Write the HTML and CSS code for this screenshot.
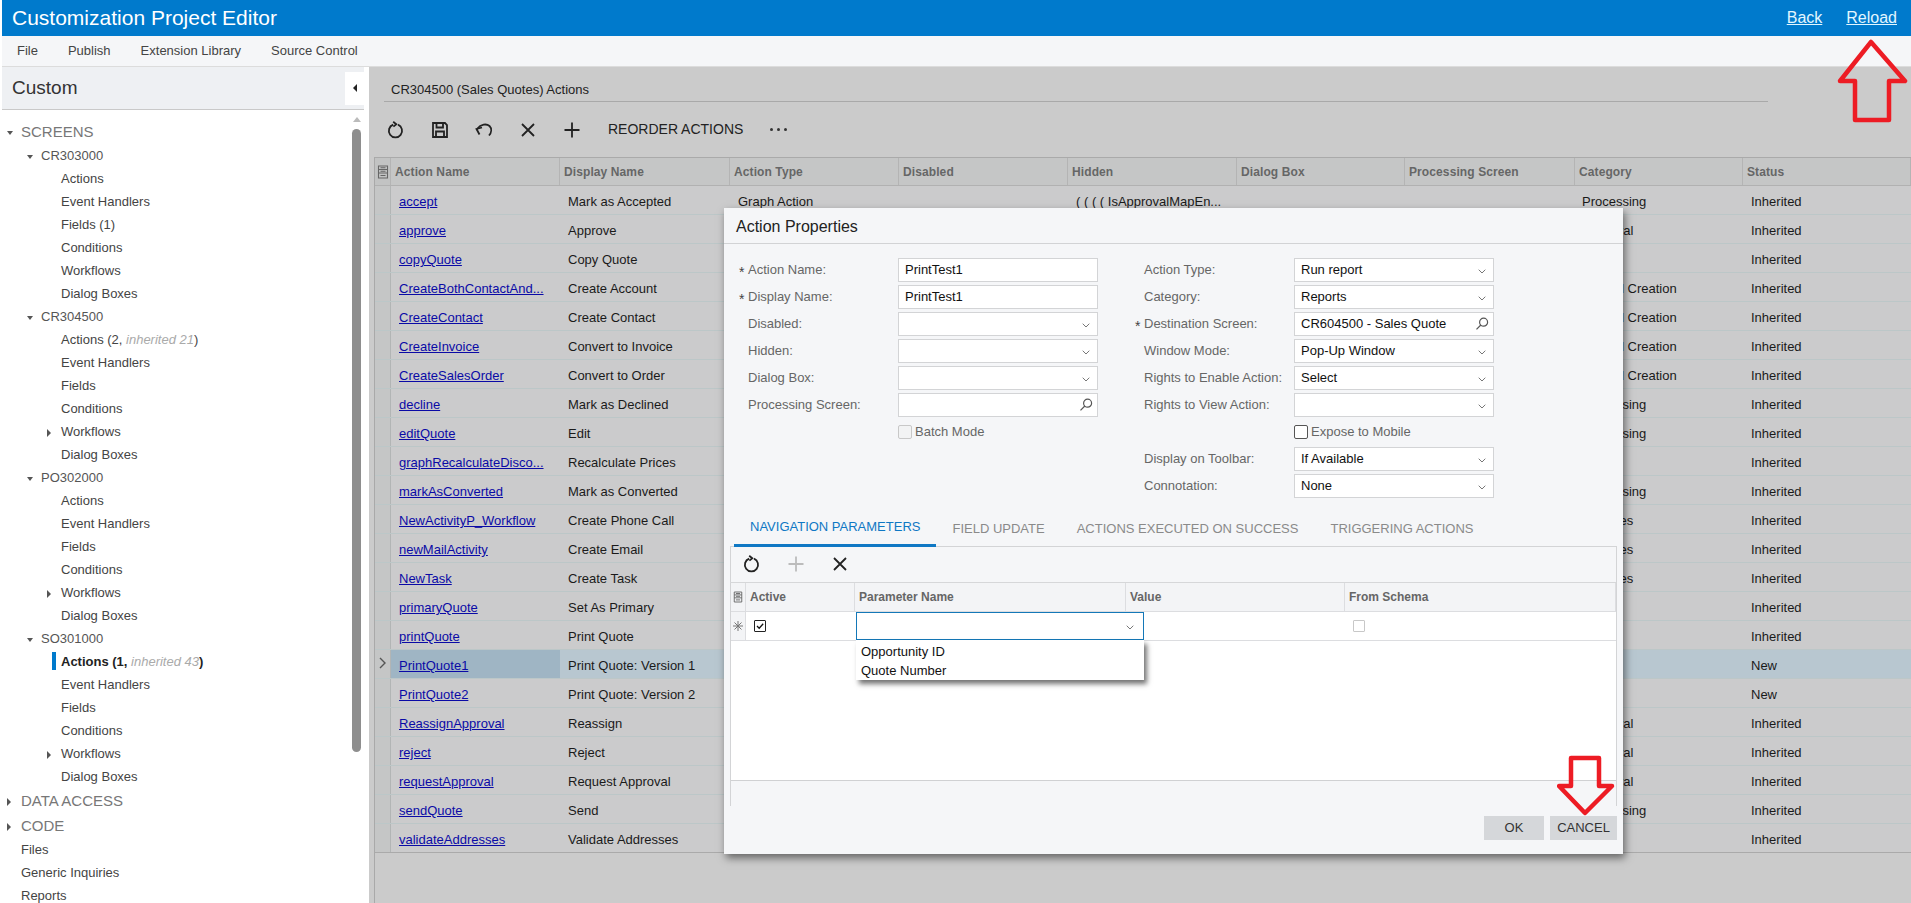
FILE: index.html
```html
<!DOCTYPE html>
<html lang="en">
<head>
<meta charset="utf-8">
<title>Customization Project Editor</title>
<link rel="stylesheet" href="styles.css">
</head>
<body>
<svg class="sprites" width="0" height="0">
  <symbol id="i-refresh" viewBox="0 0 18 18"><path d="M6.2 3.6A6.6 6.6 0 1 0 11 3.7"/><path d="M6.2 0.8 9.3 3.3 6.4 5.6" /></symbol>
  <symbol id="i-save" viewBox="0 0 18 18"><path d="M2 2H14L16 4V16H2Z"/><path d="M5.5 2V6.5H12V2M5 16V10.5H13V16"/></symbol>
  <symbol id="i-undo" viewBox="0 0 18 18"><path d="M4.5 13.5 1.5 8 7 6.5"/><path d="M2 8C6 3 11.5 2.5 14.5 5 17 7.5 16.5 11.5 14 14.5"/></symbol>
  <symbol id="i-x" viewBox="0 0 18 18"><path d="M3 3 15 15M15 3 3 15"/></symbol>
  <symbol id="i-plus" viewBox="0 0 18 18"><path d="M9 1.5V16.5M1.5 9H16.5"/></symbol>
  <symbol id="i-search" viewBox="0 0 14 14"><circle cx="8.6" cy="5.2" r="4"/><path d="M5.8 8 1.5 12.4"/></symbol>
  <symbol id="i-chev" viewBox="0 0 8 5"><path d="M0.7 0.7 4 4 7.3 0.7"/></symbol>
  <symbol id="i-cols" viewBox="0 0 12 14"><path d="M1.5 1H10.5V13H1.5ZM1.5 4.5H10.5M1.5 8H10.5M3.5 2.8H8.5M3.5 6.2H8.5M3.5 10.5H8.5"/></symbol>
</svg>

<header class="topbar">
  <span class="app-title">Customization Project Editor</span>
  <nav class="top-links"><a href="#">Back</a><a href="#">Reload</a></nav>
</header>
<nav class="menubar"><span>File</span><span>Publish</span><span>Extension Library</span><span>Source Control</span></nav>

<div class="workspace">
  <aside class="sidebar">
    <div class="side-head"><span class="side-title">Custom</span><button class="collapse"><i class="tri left"></i></button></div>
    <div class="side-body">
      <div class="tree">
        <div class="node l0 sec first"><i class="twist"><i class="tri down"></i></i>SCREENS</div>
        <div class="node l1"><i class="twist"><i class="tri down"></i></i>CR303000</div>
        <div class="node l2"><i class="twist"></i>Actions</div>
        <div class="node l2"><i class="twist"></i>Event Handlers</div>
        <div class="node l2"><i class="twist"></i>Fields (1)</div>
        <div class="node l2"><i class="twist"></i>Conditions</div>
        <div class="node l2"><i class="twist"></i>Workflows</div>
        <div class="node l2"><i class="twist"></i>Dialog Boxes</div>
        <div class="node l1"><i class="twist"><i class="tri down"></i></i>CR304500</div>
        <div class="node l2"><i class="twist"></i><span>Actions (2, <em>inherited 21</em>)</span></div>
        <div class="node l2"><i class="twist"></i>Event Handlers</div>
        <div class="node l2"><i class="twist"></i>Fields</div>
        <div class="node l2"><i class="twist"></i>Conditions</div>
        <div class="node l2"><i class="twist"><i class="tri right"></i></i>Workflows</div>
        <div class="node l2"><i class="twist"></i>Dialog Boxes</div>
        <div class="node l1"><i class="twist"><i class="tri down"></i></i>PO302000</div>
        <div class="node l2"><i class="twist"></i>Actions</div>
        <div class="node l2"><i class="twist"></i>Event Handlers</div>
        <div class="node l2"><i class="twist"></i>Fields</div>
        <div class="node l2"><i class="twist"></i>Conditions</div>
        <div class="node l2"><i class="twist"><i class="tri right"></i></i>Workflows</div>
        <div class="node l2"><i class="twist"></i>Dialog Boxes</div>
        <div class="node l1"><i class="twist"><i class="tri down"></i></i>SO301000</div>
        <div class="node l2 current"><i class="twist"></i><span>Actions (1, <em>inherited 43</em>)</span></div>
        <div class="node l2"><i class="twist"></i>Event Handlers</div>
        <div class="node l2"><i class="twist"></i>Fields</div>
        <div class="node l2"><i class="twist"></i>Conditions</div>
        <div class="node l2"><i class="twist"><i class="tri right"></i></i>Workflows</div>
        <div class="node l2"><i class="twist"></i>Dialog Boxes</div>
        <div class="node l0 sec"><i class="twist"><i class="tri right"></i></i>DATA ACCESS</div>
        <div class="node l0 sec"><i class="twist"><i class="tri right"></i></i>CODE</div>
        <div class="node l0"><i class="twist"></i>Files</div>
        <div class="node l0"><i class="twist"></i>Generic Inquiries</div>
        <div class="node l0"><i class="twist"></i>Reports</div>
      </div>
      <div class="scroll"><i class="tri up"></i><div class="thumb"></div></div>
    </div>
  </aside>

  <main class="main">
    <h1 class="page-title">CR304500 (Sales Quotes) Actions</h1>
    <div class="toolbar">
      <button class="tool"><svg class="ico"><use href="#i-refresh"/></svg></button>
      <button class="tool"><svg class="ico"><use href="#i-save"/></svg></button>
      <button class="tool"><svg class="ico"><use href="#i-undo"/></svg></button>
      <button class="tool"><svg class="ico"><use href="#i-x"/></svg></button>
      <button class="tool"><svg class="ico"><use href="#i-plus"/></svg></button>
      <span class="tool-text">REORDER ACTIONS</span>
      <span class="dots"><i></i><i></i><i></i></span>
    </div>
    <div class="grid">
      <div class="ghead">
        <div class="rh"><svg class="cols"><use href="#i-cols"/></svg></div>
        <div>Action Name</div><div>Display Name</div><div>Action Type</div><div>Disabled</div><div>Hidden</div><div>Dialog Box</div><div>Processing Screen</div><div>Category</div><div>Status</div>
      </div>
      <div class="grow"><div class="rh"></div><div><a href="#">accept</a></div><div>Mark as Accepted</div><div>Graph Action</div><div></div><div>( ( ( ( IsApprovalMapEn...</div><div></div><div></div><div>Processing</div><div>Inherited</div></div>
      <div class="grow"><div class="rh"></div><div><a href="#">approve</a></div><div>Approve</div><div></div><div></div><div></div><div></div><div></div><div>Approval</div><div>Inherited</div></div>
      <div class="grow"><div class="rh"></div><div><a href="#">copyQuote</a></div><div>Copy Quote</div><div></div><div></div><div></div><div></div><div></div><div></div><div>Inherited</div></div>
      <div class="grow"><div class="rh"></div><div><a href="#">CreateBothContactAnd...</a></div><div>Create Account</div><div></div><div></div><div></div><div></div><div></div><div>Record Creation</div><div>Inherited</div></div>
      <div class="grow"><div class="rh"></div><div><a href="#">CreateContact</a></div><div>Create Contact</div><div></div><div></div><div></div><div></div><div></div><div>Record Creation</div><div>Inherited</div></div>
      <div class="grow"><div class="rh"></div><div><a href="#">CreateInvoice</a></div><div>Convert to Invoice</div><div></div><div></div><div></div><div></div><div></div><div>Record Creation</div><div>Inherited</div></div>
      <div class="grow"><div class="rh"></div><div><a href="#">CreateSalesOrder</a></div><div>Convert to Order</div><div></div><div></div><div></div><div></div><div></div><div>Record Creation</div><div>Inherited</div></div>
      <div class="grow"><div class="rh"></div><div><a href="#">decline</a></div><div>Mark as Declined</div><div></div><div></div><div></div><div></div><div></div><div>Processing</div><div>Inherited</div></div>
      <div class="grow"><div class="rh"></div><div><a href="#">editQuote</a></div><div>Edit</div><div></div><div></div><div></div><div></div><div></div><div>Processing</div><div>Inherited</div></div>
      <div class="grow"><div class="rh"></div><div><a href="#">graphRecalculateDisco...</a></div><div>Recalculate Prices</div><div></div><div></div><div></div><div></div><div></div><div></div><div>Inherited</div></div>
      <div class="grow"><div class="rh"></div><div><a href="#">markAsConverted</a></div><div>Mark as Converted</div><div></div><div></div><div></div><div></div><div></div><div>Processing</div><div>Inherited</div></div>
      <div class="grow"><div class="rh"></div><div><a href="#">NewActivityP_Workflow</a></div><div>Create Phone Call</div><div></div><div></div><div></div><div></div><div></div><div>Activities</div><div>Inherited</div></div>
      <div class="grow"><div class="rh"></div><div><a href="#">newMailActivity</a></div><div>Create Email</div><div></div><div></div><div></div><div></div><div></div><div>Activities</div><div>Inherited</div></div>
      <div class="grow"><div class="rh"></div><div><a href="#">NewTask</a></div><div>Create Task</div><div></div><div></div><div></div><div></div><div></div><div>Activities</div><div>Inherited</div></div>
      <div class="grow"><div class="rh"></div><div><a href="#">primaryQuote</a></div><div>Set As Primary</div><div></div><div></div><div></div><div></div><div></div><div></div><div>Inherited</div></div>
      <div class="grow"><div class="rh"></div><div><a href="#">printQuote</a></div><div>Print Quote</div><div></div><div></div><div></div><div></div><div></div><div></div><div>Inherited</div></div>
      <div class="grow sel"><div class="rh"><svg class="row-mark" viewBox="0 0 7 12"><path d="M1 1 6 6 1 11"/></svg></div><div><a href="#">PrintQuote1</a></div><div>Print Quote: Version 1</div><div></div><div></div><div></div><div></div><div></div><div></div><div>New</div></div>
      <div class="grow"><div class="rh"></div><div><a href="#">PrintQuote2</a></div><div>Print Quote: Version 2</div><div></div><div></div><div></div><div></div><div></div><div></div><div>New</div></div>
      <div class="grow"><div class="rh"></div><div><a href="#">ReassignApproval</a></div><div>Reassign</div><div></div><div></div><div></div><div></div><div></div><div>Approval</div><div>Inherited</div></div>
      <div class="grow"><div class="rh"></div><div><a href="#">reject</a></div><div>Reject</div><div></div><div></div><div></div><div></div><div></div><div>Approval</div><div>Inherited</div></div>
      <div class="grow"><div class="rh"></div><div><a href="#">requestApproval</a></div><div>Request Approval</div><div></div><div></div><div></div><div></div><div></div><div>Approval</div><div>Inherited</div></div>
      <div class="grow"><div class="rh"></div><div><a href="#">sendQuote</a></div><div>Send</div><div></div><div></div><div></div><div></div><div></div><div>Processing</div><div>Inherited</div></div>
      <div class="grow"><div class="rh"></div><div><a href="#">validateAddresses</a></div><div>Validate Addresses</div><div></div><div></div><div></div><div></div><div></div><div></div><div>Inherited</div></div>
    </div>
  </main>
</div>

<section class="modal">
  <h2 class="modal-title">Action Properties</h2>
  <div class="form">
    <div class="form-col">
      <div class="field"><b class="star">*</b><label>Action Name:</label><div class="input">PrintTest1</div></div>
      <div class="field"><b class="star">*</b><label>Display Name:</label><div class="input">PrintTest1</div></div>
      <div class="field"><b class="star"></b><label>Disabled:</label><div class="input"><svg class="chev"><use href="#i-chev"/></svg></div></div>
      <div class="field"><b class="star"></b><label>Hidden:</label><div class="input"><svg class="chev"><use href="#i-chev"/></svg></div></div>
      <div class="field"><b class="star"></b><label>Dialog Box:</label><div class="input"><svg class="chev"><use href="#i-chev"/></svg></div></div>
      <div class="field"><b class="star"></b><label>Processing Screen:</label><div class="input"><svg class="search"><use href="#i-search"/></svg></div></div>
      <div class="field"><b class="star"></b><label></label><div class="check-row muted"><i class="box dim"></i>Batch Mode</div></div>
    </div>
    <div class="form-col">
      <div class="field"><b class="star"></b><label>Action Type:</label><div class="input">Run report<svg class="chev"><use href="#i-chev"/></svg></div></div>
      <div class="field"><b class="star"></b><label>Category:</label><div class="input">Reports<svg class="chev"><use href="#i-chev"/></svg></div></div>
      <div class="field"><b class="star">*</b><label>Destination Screen:</label><div class="input">CR604500 - Sales Quote<svg class="search"><use href="#i-search"/></svg></div></div>
      <div class="field"><b class="star"></b><label>Window Mode:</label><div class="input">Pop-Up Window<svg class="chev"><use href="#i-chev"/></svg></div></div>
      <div class="field"><b class="star"></b><label>Rights to Enable Action:</label><div class="input">Select<svg class="chev"><use href="#i-chev"/></svg></div></div>
      <div class="field"><b class="star"></b><label>Rights to View Action:</label><div class="input"><svg class="chev"><use href="#i-chev"/></svg></div></div>
      <div class="field"><b class="star"></b><label></label><div class="check-row"><i class="box"></i>Expose to Mobile</div></div>
      <div class="field"><b class="star"></b><label>Display on Toolbar:</label><div class="input">If Available<svg class="chev"><use href="#i-chev"/></svg></div></div>
      <div class="field"><b class="star"></b><label>Connotation:</label><div class="input">None<svg class="chev"><use href="#i-chev"/></svg></div></div>
    </div>
  </div>
  <div class="tabs">
    <span class="tab active">NAVIGATION PARAMETERS</span>
    <span class="tab">FIELD UPDATE</span>
    <span class="tab">ACTIONS EXECUTED ON SUCCESS</span>
    <span class="tab">TRIGGERING ACTIONS</span>
  </div>
  <div class="panel">
    <div class="panel-tools">
      <button class="tool"><svg class="ico"><use href="#i-refresh"/></svg></button>
      <button class="tool off"><svg class="ico"><use href="#i-plus"/></svg></button>
      <button class="tool"><svg class="ico"><use href="#i-x"/></svg></button>
    </div>
    <div class="phead">
      <div class="prh"><svg class="cols"><use href="#i-cols"/></svg></div>
      <div>Active</div><div>Parameter Name</div><div>Value</div><div>From Schema</div>
    </div>
    <div class="prow">
      <div class="prh star-cell"><svg class="new-mark" viewBox="0 0 10 10"><path d="M5 0V10M0 5H10M1.5 1.5 8.5 8.5M8.5 1.5 1.5 8.5"/></svg></div>
      <div><i class="box small checked"><svg viewBox="0 0 10 10"><path d="M2 5 4.2 7.2 8.2 2.8"/></svg></i></div>
      <div class="editor-cell">
        <div class="editor"><svg class="chev"><use href="#i-chev"/></svg></div>
        <ul class="dropdown"><li>Opportunity ID</li><li>Quote Number</li></ul>
      </div>
      <div></div>
      <div><i class="box small dim schema"></i></div>
    </div>
    <div class="pbody"></div>
    <div class="pfoot"></div>
  </div>
  <div class="actions"><button class="btn ok">OK</button><button class="btn cancel">CANCEL</button></div>
</section>

<svg class="arrow arrow-up" viewBox="0 0 72 84"><path d="M34 3 68 42H52V81H18V42H3Z"/></svg>
<svg class="arrow arrow-down" viewBox="0 0 58 62"><path d="M14 3H42V31H55L28 58 2 31H14Z"/></svg>
</body>
</html>
```
FILE: styles.css
```css
* { box-sizing: border-box; }
html, body { margin: 0; height: 100%; overflow: hidden; }
body {
  font: 13px/1.2 "Liberation Sans", Arial, sans-serif;
  color: #333;
  background: #fff;
  display: flex;
  flex-direction: column;
  padding-left: 2px;
}
.sprites { position: absolute; }
svg { fill: none; stroke: currentColor; }
i { font-style: normal; }
button { font: inherit; border: 0; padding: 0; background: none; color: inherit; }

/* top */
.topbar {
  height: 36px; flex: none;
  background: #007acc;
  color: #fff;
  display: flex; align-items: center; justify-content: space-between;
  padding: 0 14px 0 10px;
}
.app-title { font-size: 21px; }
.top-links { display: flex; gap: 24px; font-size: 16px; }
.top-links a { color: #e3f6ff; }
.menubar {
  height: 31px; flex: none;
  background: #f5f6f8;
  display: flex; align-items: center; gap: 30px;
  padding-left: 15px;
  color: #444;
  border-bottom: 1px solid #dcdcdc;
}
.workspace { flex: 1; min-height: 0; display: flex; }

/* sidebar */
.sidebar { width: 362px; flex: none; display: flex; flex-direction: column; }
.side-head {
  height: 43px; flex: none;
  background: #eef0f3;
  border-bottom: 1px solid #c9c9c9;
  display: flex; align-items: center; justify-content: space-between;
  padding-left: 10px;
}
.side-title { font-size: 19px; color: #333; }
.collapse { width: 19px; height: 33px; background: #fff; display: flex; align-items: center; justify-content: center; }
.side-body { flex: 1; min-height: 0; display: flex; }
.tree { flex: 1; padding-top: 9px; overflow: hidden; }
.node { height: 23px; display: flex; align-items: center; color: #444; }
.twist { width: 14px; flex: none; display: flex; align-items: center; padding-top: 3px; }
.l0 { padding-left: 5px; }
.l1 { padding-left: 25px; }
.l2 { padding-left: 45px; }
.sec { font-size: 15px; color: #777; height: 25px; }
.l1 { color: #555; }
.node em { color: #aaa; }
.current { font-weight: bold; color: #222; position: relative; }
.current em { font-weight: normal; }
.current::before { content: ""; position: absolute; left: 50px; top: 2px; width: 4px; height: 18px; background: #007acc; }
.tri { display: block; width: 0; height: 0; border-style: solid; border-color: transparent; }
.tri.down { border-width: 4px 3.5px 0; border-top-color: #555; }
.tri.right { border-width: 4px 0 4px 4px; border-left-color: #555; }
.tri.left { border-width: 4px 4px 4px 0; border-right-color: #222; }
.tri.up { border-width: 0 4.5px 5px; border-bottom-color: #bbb; margin: 0 auto; }
.scroll { width: 12px; flex: none; margin-right: 0; padding: 7px 3px 0 0; }
.thumb { width: 9px; height: 623px; margin-top: 7px; background: #8e8e8e; border-radius: 5px; }

/* main */
.main { flex: 1; min-width: 0; margin-left: 5px; background: #cbcbcb; color: #1a1a1a; overflow: hidden; }
.page-title {
  margin: 0 0 0 15px; width: 1384px; height: 35px;
  padding: 12px 0 0 7px;
  font-size: 13px; font-weight: normal; line-height: 22px;
  border-bottom: 1px solid #a9a9a9;
  color: #222;
}
.toolbar { height: 55px; margin-left: 5px; display: flex; align-items: center; color: #222; }
.tool { width: 44px; height: 36px; flex: none; display: flex; align-items: center; justify-content: center; color: #222; }
.tool.off { color: #bcbcbc; }
.ico { width: 18px; height: 18px; stroke-width: 1.8; }
.tool-text { margin-left: 14px; color: #222; font-size: 14px; }
.dots { margin-left: 27px; display: flex; gap: 4px; }
.dots i { width: 3px; height: 3px; background: #333; border-radius: 50%; }
.grid { margin-left: 5px; border-left: 1px solid #a9a9a9; height: 100%; }
.ghead, .grow { display: grid; grid-template-columns: 16px 169px 170px 169px 169px 169px 168px 170px 168px 1fr; }
.ghead {
  height: 29px;
  background: #c5c6c6;
  border-top: 1px solid #aaa; border-bottom: 1px solid #b1b1b1;
  font-weight: bold; font-size: 12px; color: #666; letter-spacing: .1px;
}
.ghead > div { padding: 1px 0 0 4px; display: flex; align-items: center; border-right: 1px solid #b4b4b4; white-space: nowrap; }
.ghead > .rh { padding: 0; justify-content: center; background: #c2c3c3; }
.cols { width: 12px; height: 14px; stroke: #666; stroke-width: 1.1; }
.grow { height: 29px; border-bottom: 1px solid #bcc7c8; background: #cbcbcc; }
.grow:last-child { border-bottom-color: #aaa; }
.grow > div { padding: 4px 0 0 8px; display: flex; align-items: center; white-space: nowrap; overflow: hidden; }
.grow > div:nth-child(9) { padding-left: 7px; }
.grow > .rh { background: #c5c6c6; border-right: 1px solid #b2b5b5; padding: 0; justify-content: center; }
.grow a { color: #0a0aa6; }
.grow.sel { background: #b8c7d0; }
.grow.sel > div:nth-child(2) { background: #9fb5c4; }
.row-mark { width: 7px; height: 12px; stroke: #555; stroke-width: 1.4; margin-top: -3px; }

/* modal */
.modal {
  position: absolute; left: 724px; top: 208px; width: 899px; height: 646px;
  background: #f5f6f8;
  box-shadow: 2px 4px 8px rgba(0,0,0,.5);
  display: flex; flex-direction: column;
}
.modal-title {
  margin: 0; height: 36px; flex: none;
  padding: 1px 0 0 12px;
  font-size: 16px; font-weight: normal; line-height: 35px;
  color: #222;
  border-bottom: 1px solid #d2d3d5;
}
.form { display: flex; gap: 38px; padding: 14px 0 0 16px; height: 257px; flex: none; }
.field { height: 27px; display: flex; align-items: flex-start; }
.star { width: 9px; margin-left: -1px; flex: none; font-weight: normal; font-size: 14px; color: #444; line-height: 28px; }
.field label { width: 150px; flex: none; color: #666; line-height: 24px; white-space: nowrap; }
.input {
  position: relative;
  width: 200px; height: 24px; flex: none;
  background: #fff; border: 1px solid #d3d4d6;
  padding-left: 6px; line-height: 22px; color: #111;
}
.chev { position: absolute; right: 7px; top: 10px; width: 8px; height: 5px; stroke: #777; stroke-width: 1; }
.search { position: absolute; right: 4px; top: 4px; width: 14px; height: 14px; stroke: #555; stroke-width: 1.2; }
.check-row { height: 24px; display: flex; align-items: center; gap: 3px; color: #666; }
.box { display: block; width: 14px; height: 14px; border: 1px solid #555; border-radius: 2px; background: #fff; flex: none; }
.box.dim { border-color: #c8c8c8; background: #f2f3f4; }
.tabs { display: flex; height: 46px; flex: none; margin-left: 10px; position: relative; z-index: 1; }
.tab { height: 46px; padding: 10px 16px 0; line-height: 35px; color: #8a8a8a; white-space: nowrap; }
.tab.active { color: #0f78c4; border-bottom: 3px solid #0f78c4; line-height: 32px; }
.panel {
  margin: -1px 0 0 6px; width: 887px; height: 260px; flex: none;
  border: 1px solid #d3d4d6; border-bottom: 0;
  display: flex; flex-direction: column;
}
.panel-tools { height: 36px; flex: none; margin-left: -1px; padding-bottom: 2px; display: flex; align-items: center; border-bottom: 1px solid #d6d7d9; }
.phead, .prow { display: grid; grid-template-columns: 15px 109px 271px 219px 1fr; flex: none; }
.phead {
  height: 29px; background: #f3f4f6; border-bottom: 1px solid #dcdde0;
  font-weight: bold; font-size: 12px; color: #666;
}
.phead > div { display: flex; align-items: center; padding: 1px 0 0 4px; border-right: 1px solid #dcdde0; }
.phead > .prh { padding: 0; justify-content: center; }
.phead .cols { width: 10px; height: 12px; }
.prow { height: 29px; background: #fff; border-bottom: 1px solid #dcdde0; }
.prow > div { display: flex; align-items: center; }
.star-cell { background: #f3f4f6; border-right: 1px solid #dcdde0; justify-content: center; color: #777; }
.new-mark { width: 10px; height: 10px; stroke: #777; stroke-width: 1; }
.box.small { width: 12px; height: 12px; margin-left: 8px; border-radius: 1px; }
.box.small svg { display: block; width: 10px; height: 10px; stroke: #111; stroke-width: 1.3; }
.box.checked { border-color: #222; }
.box.schema { margin-left: 8px; background: #fff; }
.editor-cell { position: relative; }
.editor { position: absolute; left: 1px; top: 0; width: 288px; height: 28px; background: #fff; border: 1px solid #1478b8; }
.editor .chev { top: 12px; right: 9px; }
.dropdown {
  position: absolute; left: 1px; top: 28px; width: 288px; height: 40px; z-index: 2;
  margin: 0; padding: 3px 5px 0; list-style: none;
  background: #fff; color: #111; line-height: 18.5px;
  box-shadow: 3px 4px 5px rgba(0,0,0,.55);
}
.pbody { flex: 1; background: #fff; border-bottom: 1px solid #d0d1d3; }
.pfoot { height: 25px; flex: none; }
.actions { display: flex; justify-content: flex-end; gap: 6px; padding: 10px 6px 0 0; }
.btn { height: 24px; background: #d5d7da; color: #333; }
.ok { width: 60px; }
.cancel { width: 67px; }

/* annotations */
.arrow { position: absolute; fill: none; stroke: #ed1c24; stroke-width: 4.5; stroke-linejoin: round; z-index: 5; }
.arrow-up { left: 1837px; top: 39px; width: 72px; height: 84px; }
.arrow-down { left: 1557px; top: 755px; width: 58px; height: 62px; }
```
